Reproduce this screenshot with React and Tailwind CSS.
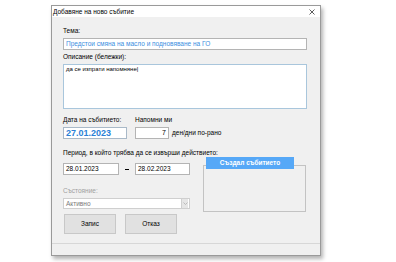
import React from "react";

const font = { fontFamily: '"Liberation Sans", Arial, sans-serif' };

const Box = ({ className = "", children }) => (
  <div className={`flex items-center bg-white border px-[2px] ${className}`}>
    {children}
  </div>
);

export default function App() {
  return (
    <div
      className="w-[396px] h-[262px] bg-white pl-[51px] pt-[5px] text-[6.5px] leading-[8px] text-black"
      style={font}
    >
      <div className="w-[270px] h-[251px] border border-[#9a9a9a] bg-[#f0f0f0] flex flex-col shadow-[2px_3px_4px_rgba(0,0,0,0.3)]">
        {/* title bar */}
        <div className="h-[11px] bg-white flex items-center justify-between pl-[1px] pr-[5px]">
          <span>Добавяне на ново събитие</span>
          <svg width="6" height="6" viewBox="0 0 6 6">
            <path d="M0.5 0.5 L5.5 5.5 M5.5 0.5 L0.5 5.5" stroke="#333" strokeWidth="0.8" />
          </svg>
        </div>

        <div className="flex flex-col pl-[11px] pr-[13px]">
          <div className="mt-[10px] h-[8px]">Тема:</div>
          <Box className="mt-[3px] h-[12px] border-[#b4b4b4] text-[#3b8ee0]">
            Предстои смяна на масло и подновяване на ГО
          </Box>

          <div className="mt-[3px] h-[8px]">Описание (бележки):</div>
          <div className="mt-[3px] h-[45px] bg-white border border-[#a9c6dc] px-[2px] pt-[1px] text-[6px] leading-[7px]">
            да се изпрати напомняне<span className="font-thin">|</span>
          </div>

          <div className="mt-[7px] flex gap-[8px]">
            <div className="flex flex-col w-[64px]">
              <div className="h-[8px]">Дата на събитието:</div>
              <Box className="mt-[3px] h-[12px] border-[#a9b9c8] text-[#2a7fd6] font-bold text-[9px]">
                27.01.2023
              </Box>
            </div>
            <div className="flex flex-col">
              <div className="h-[8px]">Напомни ми</div>
              <div className="mt-[3px] flex items-center gap-[3px]">
                <Box className="h-[12px] w-[34px] justify-end border-[#b4b4b4] text-[7px]">7</Box>
                <span>ден/дни по-рано</span>
              </div>
            </div>
          </div>

          <div className="mt-[10px] h-[8px]">
            Период, в който трябва да се извърши действието:
          </div>

          <div className="flex items-start gap-[13px]">
            <div className="flex flex-col w-[127px]">
              <div className="mt-[6px] flex items-center">
                <Box className="h-[12px] w-[56px] border-[#b4b4b4]">28.01.2023</Box>
                <div className="w-[16px] flex justify-center">
                  <div className="w-[4px] h-[1px] bg-black" />
                </div>
                <Box className="h-[12px] w-[55px] border-[#b4b4b4]">28.02.2023</Box>
              </div>
              <div className="mt-[12px] h-[8px] text-[#a0a0a0]">Състояние:</div>
              <div className="mt-[3px] h-[11px] flex items-center bg-white border border-[#cfcfcf] pl-[2px] text-[#7a7a7a]">
                <span className="flex-1">Активно</span>
                <div className="w-[7px] h-[9px] bg-[#e6e6e6] border-l border-[#d0d0d0] flex items-center justify-center mr-[1px]">
                  <svg width="5" height="3" viewBox="0 0 5 3">
                    <path d="M0.5 0.5 L2.5 2.5 L4.5 0.5" stroke="#b0b0b0" strokeWidth="0.8" fill="none" />
                  </svg>
                </div>
              </div>
            </div>
            <div className="flex flex-col w-[103px]">
              <div className="relative z-10 ml-[3px] w-[88px] h-[12px] bg-[#56a8f7] text-white font-bold flex items-center justify-center">
                Създал събитието
              </div>
              <div className="-mt-[4px] h-[47px] border border-[#c3c3c3]" />
            </div>
          </div>

          <div className="mt-[2px] flex gap-[9px] pl-[1px]">
            <div className="w-[52px] h-[20px] bg-[#e1e1e1] border border-[#c8c8c8] flex items-center justify-center">
              Запис
            </div>
            <div className="w-[52px] h-[20px] bg-[#e1e1e1] border border-[#c8c8c8] flex items-center justify-center">
              Отказ
            </div>
          </div>
        </div>

        <div className="mt-[9px] h-[1px] bg-[#d7d7d7]" />
      </div>
    </div>
  );
}
